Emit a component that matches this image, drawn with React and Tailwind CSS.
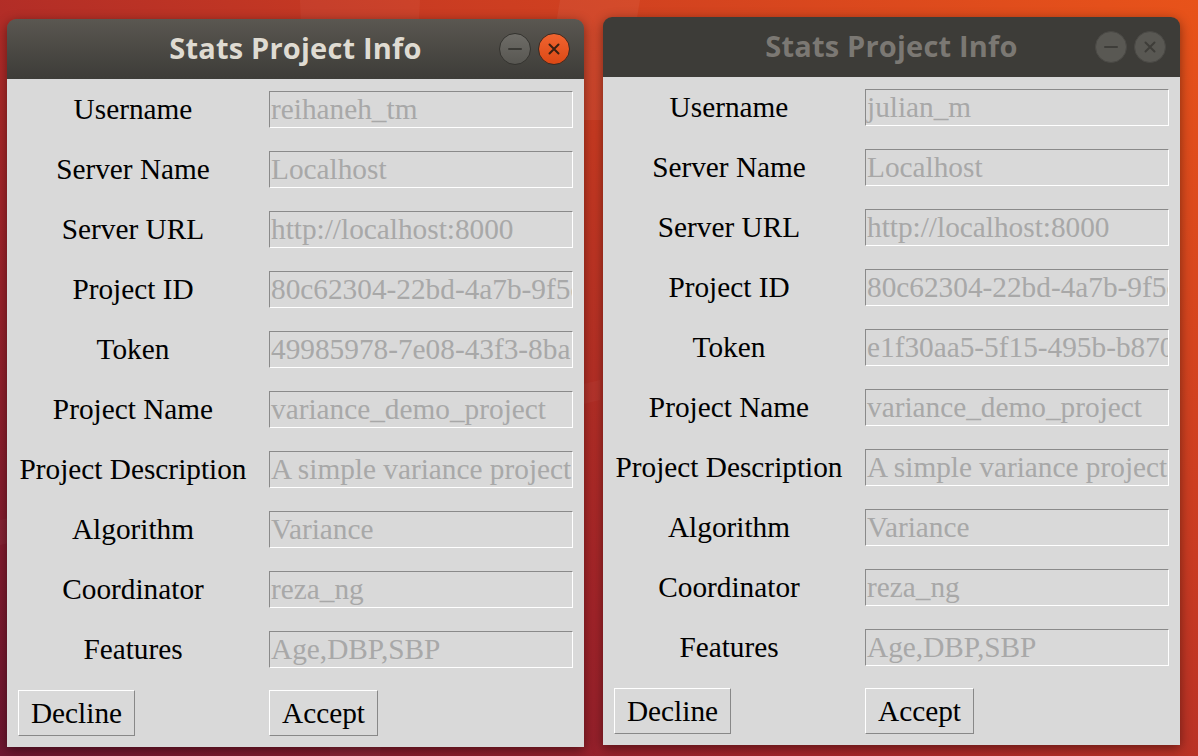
import React from "react";

const rows1 = [
  ["Username", "reihaneh_tm"],
  ["Server Name", "Localhost"],
  ["Server URL", "http://localhost:8000"],
  ["Project ID", "80c62304-22bd-4a7b-9f5c-1a2b3c4d5e6f"],
  ["Token", "49985978-7e08-43f3-8ba1-0c9d8e7f6a5b"],
  ["Project Name", "variance_demo_project"],
  ["Project Description", "A simple variance project"],
  ["Algorithm", "Variance"],
  ["Coordinator", "reza_ng"],
  ["Features", "Age,DBP,SBP"],
];

const rows2 = rows1.map(([l, v]) => {
  if (l === "Username") return [l, "julian_m"];
  if (l === "Token") return [l, "e1f30aa5-5f15-495b-b870-2d3c4e5f6a7b"];
  return [l, v];
});

const serif = { fontFamily: '"Liberation Serif", "Times New Roman", serif' };

function TitleBar({ active }) {
  return (
    <div
      className={
        "relative h-[60px] rounded-t-[9px] flex items-center justify-center " +
        (active
          ? "bg-gradient-to-b from-[#5a5751] to-[#3d3c38]"
          : "bg-[#3d3c38]")
      }
    >
      <span
        className={
          "text-[29px] font-bold tracking-[0.2px] -mt-[2px] " +
          (active ? "text-[#dfdbd2]" : "text-[#7b7873]")
        }
        style={{ fontFamily: '"Open Sans", "Noto Sans", sans-serif' }}
      >
        Stats Project Info
      </span>
      <div className="absolute right-[14px] top-0 h-full flex items-center gap-[7px]">
        <div
          className={
            "w-[32px] h-[32px] rounded-full flex items-center justify-center border " +
            (active
              ? "bg-gradient-to-b from-[#6e6c67] to-[#585752] border-[#34332f]"
              : "bg-[#595853] border-[#4a4945]")
          }
        >
          <div
            className={
              "w-[14px] h-[2px] rounded " +
              (active ? "bg-[#3a3935]" : "bg-[#3e3d39]")
            }
          />
        </div>
        <div
          className={
            "w-[32px] h-[32px] rounded-full flex items-center justify-center border " +
            (active
              ? "bg-gradient-to-b from-[#f0642f] to-[#dd4814] border-[#3a2a22]"
              : "bg-[#595853] border-[#4a4945]")
          }
        >
          <svg width="14" height="14" viewBox="0 0 14 14">
            <path
              d="M2.5 2.5 L11.5 11.5 M11.5 2.5 L2.5 11.5"
              stroke={active ? "#3a2012" : "#3e3d39"}
              strokeWidth="2"
              strokeLinecap="round"
            />
          </svg>
        </div>
      </div>
    </div>
  );
}

function Window({ rows, active, className }) {
  return (
    <div
      className={
        "absolute w-[577px] rounded-t-[9px] shadow-[0_3px_12px_rgba(0,0,0,0.45)] " +
        className
      }
    >
      <TitleBar active={active} />
      <div className="bg-[#d9d9d9] flex flex-col" style={serif}>
        {rows.map(([label, value]) => (
          <div key={label} className="h-[60px] flex items-center">
            <div className="w-[252px] pt-[2px] text-center text-[29.3px] leading-none text-black whitespace-nowrap">
              {label}
            </div>
            <div className="ml-[10px] w-[304px] h-[37px] border-t border-l border-[#8a8a8a] border-b-white border-r-white border-b border-r overflow-hidden whitespace-nowrap flex items-center pl-[1px] pt-[2px]">
              <span className="text-[29.3px] leading-none text-[#a8a8a8]">{value}</span>
            </div>
          </div>
        ))}
        <div className="h-[68px] flex items-center">
          <div className="ml-[11px] w-[117px] h-[46px] pt-[2px] border border-t-white border-l-white border-b-[#888888] border-r-[#888888] flex items-center justify-center text-[29.3px] leading-none text-black">
            Decline
          </div>
          <div className="ml-[134px] w-[109px] h-[46px] pt-[2px] border border-t-white border-l-white border-b-[#888888] border-r-[#888888] flex items-center justify-center text-[29.3px] leading-none text-black">
            Accept
          </div>
        </div>
      </div>
    </div>
  );
}

export default function App() {
  return (
    <div className="relative w-[1198px] h-[756px] overflow-hidden bg-[linear-gradient(35deg,#6e1630_0%,#a3242a_35%,#c93b22_65%,#e8531a_100%)]">
      <svg className="absolute inset-0" width="1198" height="756">
        <path d="M300 0 L420 0 L380 756 L330 756 Z" fill="rgba(255,255,255,0.04)" />
        <path d="M560 0 L640 0 L620 120 L540 120 Z" fill="rgba(255,255,255,0.05)" />
        <path d="M0 520 L600 380 L600 400 L0 545 Z" fill="rgba(255,255,255,0.03)" />
      </svg>
      <Window rows={rows1} active className="left-[7px] top-[19px]" />
      <Window rows={rows2} active={false} className="left-[603px] top-[17px]" />
    </div>
  );
}
